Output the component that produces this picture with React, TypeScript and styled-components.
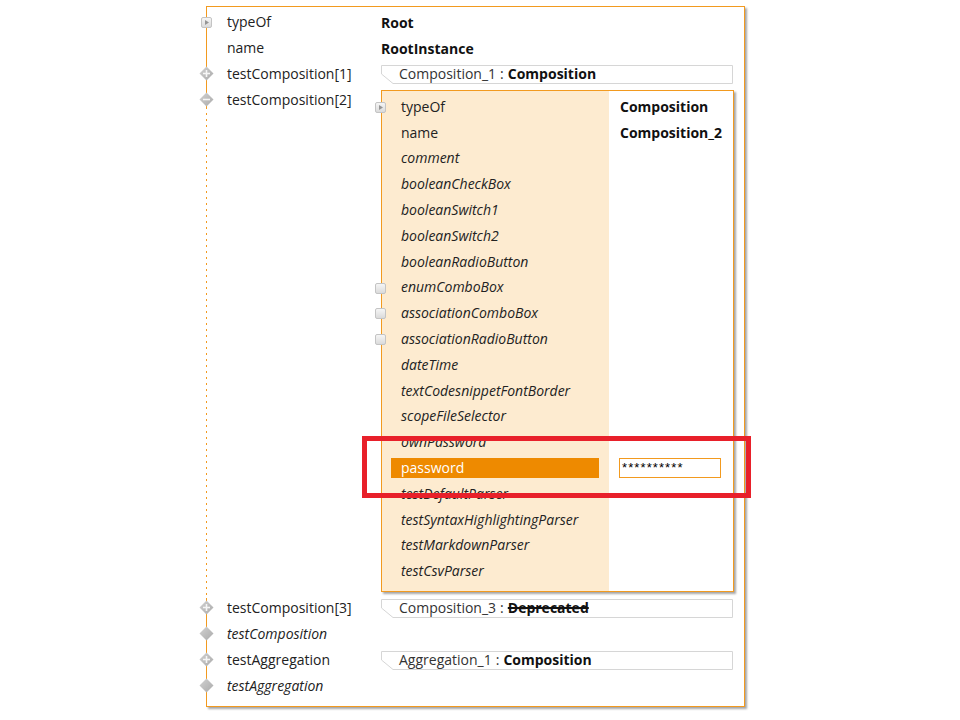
import React from 'react';
import styled, { createGlobalStyle, css } from 'styled-components';

// Palette
const ORANGE = '#f29a1f';
const PEACH = '#fdebd0';
const HIGHLIGHT = '#ee8a00';
const FONT = '"Open Sans", "Noto Sans", sans-serif';

type IconKind = 'none' | 'arrow' | 'square' | 'plus' | 'minus' | 'diamond';

interface RefValue {
  name: string;
  type: string;
  deprecated?: boolean;
}

interface TopRow {
  label: string;
  italic?: boolean;
  icon: IconKind;
  value?: string;
  ref?: RefValue;
  expanded?: boolean;
}

interface InnerRow {
  label: string;
  italic?: boolean;
  icon?: IconKind;
  value?: string;
  selected?: boolean;
  password?: string;
}

const topRows: TopRow[] = [
  { label: 'typeOf', icon: 'arrow', value: 'Root' },
  { label: 'name', icon: 'none', value: 'RootInstance' },
  { label: 'testComposition[1]', icon: 'plus', ref: { name: 'Composition_1', type: 'Composition' } },
  { label: 'testComposition[2]', icon: 'minus', expanded: true },
  { label: 'testComposition[3]', icon: 'plus', ref: { name: 'Composition_3', type: 'Deprecated', deprecated: true } },
  { label: 'testComposition', icon: 'diamond', italic: true },
  { label: 'testAggregation', icon: 'plus', ref: { name: 'Aggregation_1', type: 'Composition' } },
  { label: 'testAggregation', icon: 'diamond', italic: true },
];

const innerRows: InnerRow[] = [
  { label: 'typeOf', icon: 'arrow', value: 'Composition' },
  { label: 'name', value: 'Composition_2' },
  { label: 'comment', italic: true },
  { label: 'booleanCheckBox', italic: true },
  { label: 'booleanSwitch1', italic: true },
  { label: 'booleanSwitch2', italic: true },
  { label: 'booleanRadioButton', italic: true },
  { label: 'enumComboBox', italic: true, icon: 'square' },
  { label: 'associationComboBox', italic: true, icon: 'square' },
  { label: 'associationRadioButton', italic: true, icon: 'square' },
  { label: 'dateTime', italic: true },
  { label: 'textCodesnippetFontBorder', italic: true },
  { label: 'scopeFileSelector', italic: true },
  { label: 'ownPassword', italic: true },
  { label: 'password', selected: true, password: '**********' },
  { label: 'testDefaultParser', italic: true },
  { label: 'testSyntaxHighlightingParser', italic: true },
  { label: 'testMarkdownParser', italic: true },
  { label: 'testCsvParser', italic: true },
];

const GlobalStyle = createGlobalStyle`
  html, body {
    margin: 0;
    padding: 0;
    background: #ffffff;
  }
  body {
    font-family: ${FONT};
    font-size: 14px;
    color: #222222;
  }
`;

const Page = styled.div`
  position: relative;
  width: 960px;
  height: 720px;
  box-sizing: border-box;
  padding: 6px 0 0 206px;
  overflow: hidden;
`;

const OuterPanel = styled.div`
  width: 539px;
  box-sizing: border-box;
  border: 1px solid ${ORANGE};
  box-shadow: 2px 2px 2px rgba(0, 0, 0, 0.35);
  padding: 2px 0 7px;
  background: #ffffff;
`;

const Row = styled.div<{ $expanded?: boolean }>`
  position: relative;
  display: grid;
  grid-template-columns: 20px 154px 1fr;
  min-height: 26px;

  ${({ $expanded }) =>
    $expanded &&
    css`
      &::before {
        content: '';
        position: absolute;
        left: -1px;
        top: 20px;
        bottom: -3px;
        width: 1px;
        background: repeating-linear-gradient(
          to bottom,
          ${ORANGE} 0 2px,
          #ffffff 2px 6px
        );
      }
    `}
`;

const Label = styled.div<{ $italic?: boolean }>`
  grid-column: 2;
  height: 26px;
  line-height: 26px;
  white-space: nowrap;
  font-style: ${({ $italic }) => ($italic ? 'italic' : 'normal')};
  color: #222222;
`;

const ValueCell = styled.div`
  grid-column: 3;
  display: flex;
  flex-direction: column;
  justify-content: center;
  padding-right: 11px;
  min-height: 26px;
`;

const BoldValue = styled.span`
  font-weight: 700;
  color: #111111;
  white-space: nowrap;
`;

const RefBox = styled.div`
  position: relative;
  height: 19px;
  line-height: 17px;
  padding-left: 18px;
  white-space: nowrap;
  color: #333333;
`;

const RefFrame = styled.svg`
  position: absolute;
  inset: 0;
  width: 100%;
  height: 100%;
  overflow: visible;
`;

const RefText = styled.span`
  position: relative;
`;

const Colon = styled.span`
  margin: 0 4px;
`;

const RefType = styled.span<{ $deprecated?: boolean }>`
  font-weight: 700;
  color: #111111;
  text-decoration: ${({ $deprecated }) => ($deprecated ? 'line-through' : 'none')};
  text-decoration-thickness: 1.5px;
`;

const IconSlot = styled.span<{ $left: number; $top: number }>`
  position: absolute;
  left: ${({ $left }) => $left}px;
  top: ${({ $top }) => $top}px;
  display: block;
  line-height: 0;
  z-index: 2;
`;

const NestedPanel = styled.div`
  margin: 3px 0;
  width: 353px;
  box-sizing: border-box;
  border: 1px solid ${ORANGE};
  box-shadow: 2px 2px 2px rgba(0, 0, 0, 0.35);
  padding: 3px 0 7px;
  background: linear-gradient(to right, ${PEACH} 0 227px, #ffffff 227px);
`;

const InnerLine = styled.div`
  position: relative;
  display: grid;
  grid-template-columns: 227px 1fr;
  height: 25.8px;
  align-items: center;
`;

const InnerLabelCell = styled.div`
  padding: 0 10px 0 9px;
`;

const InnerLabel = styled.div<{ $italic?: boolean; $selected?: boolean }>`
  height: 20px;
  line-height: 20px;
  padding-left: 10px;
  white-space: nowrap;
  font-style: ${({ $italic }) => ($italic ? 'italic' : 'normal')};
  background: ${({ $selected }) => ($selected ? HIGHLIGHT : 'transparent')};
  color: ${({ $selected }) => ($selected ? '#ffffff' : '#222222')};
`;

const InnerValueCell = styled.div`
  padding-left: 11px;
  padding-right: 12px;
`;

const PasswordField = styled.div`
  margin-left: -1px;
  width: 102px;
  height: 20px;
  box-sizing: border-box;
  border: 1px solid ${ORANGE};
  background: #ffffff;
  padding-left: 2px;
  font-family: "Liberation Sans", sans-serif;
  font-size: 13px;
  line-height: 17px;
  letter-spacing: 1.1px;
  color: #000000;
`;

const Annotation = styled.div`
  position: absolute;
  left: 362px;
  top: 436px;
  width: 389px;
  height: 62px;
  box-sizing: border-box;
  border: 5px solid #e8202a;
  pointer-events: none;
`;

const Diamond: React.FC<{ sign?: 'plus' | 'minus' }> = ({ sign }) => (
  <svg width="15" height="15" viewBox="0 0 15 15">
    <defs>
      <linearGradient id="dg" x1="0" y1="0" x2="1" y2="1">
        <stop offset="0" stopColor="#d2d2d2" />
        <stop offset="1" stopColor="#aaaaaa" />
      </linearGradient>
    </defs>
    <polygon points="7.5,0.5 14.5,7.5 7.5,14.5 0.5,7.5" fill="url(#dg)" />
    {sign && <line x1="4" y1="7.5" x2="11" y2="7.5" stroke="#f6f6f6" strokeWidth="1.6" />}
    {sign === 'plus' && <line x1="7.5" y1="4" x2="7.5" y2="11" stroke="#f6f6f6" strokeWidth="1.6" />}
  </svg>
);

const SquareIcon: React.FC<{ arrow?: boolean }> = ({ arrow }) => (
  <svg width="11" height="11" viewBox="0 0 11 11">
    <defs>
      <linearGradient id="sg" x1="0" y1="0" x2="0" y2="1">
        <stop offset="0" stopColor="#f7f7f7" />
        <stop offset="1" stopColor="#d9d9d9" />
      </linearGradient>
    </defs>
    <rect x="0.5" y="0.5" width="10" height="10" rx="1.5" fill="url(#sg)" stroke="#c4c4c4" />
    {arrow && <polygon points="4,3 8,5.5 4,8" fill="#959595" />}
  </svg>
);

const TopIcon: React.FC<{ kind: IconKind }> = ({ kind }) => {
  if (kind === 'none') return null;
  if (kind === 'arrow') {
    return (
      <IconSlot $left={-6} $top={8}>
        <SquareIcon arrow />
      </IconSlot>
    );
  }
  return (
    <IconSlot $left={-8} $top={5}>
      <Diamond sign={kind === 'plus' ? 'plus' : kind === 'minus' ? 'minus' : undefined} />
    </IconSlot>
  );
};

const Reference: React.FC<{ value: RefValue }> = ({ value }) => (
  <RefBox>
    <RefFrame viewBox="0 0 352 19" preserveAspectRatio="none">
      <polygon
        points="0.5,0.5 351.5,0.5 351.5,18.5 12,18.5 0.5,9"
        fill="#ffffff"
        stroke="#d6d6d6"
        strokeWidth="1"
      />
    </RefFrame>
    <RefText>
      {value.name}
      <Colon>:</Colon>
      <RefType $deprecated={value.deprecated}>{value.type}</RefType>
    </RefText>
  </RefBox>
);

const NestedComposition: React.FC = () => (
  <NestedPanel>
    {innerRows.map((row) => (
      <InnerLine key={row.label}>
        {row.icon && (
          <IconSlot $left={-7} $top={8}>
            <SquareIcon arrow={row.icon === 'arrow'} />
          </IconSlot>
        )}
        <InnerLabelCell>
          <InnerLabel $italic={row.italic} $selected={row.selected}>
            {row.label}
          </InnerLabel>
        </InnerLabelCell>
        <InnerValueCell>
          {row.value && <BoldValue>{row.value}</BoldValue>}
          {row.password && <PasswordField>{row.password}</PasswordField>}
        </InnerValueCell>
      </InnerLine>
    ))}
  </NestedPanel>
);

export default function App() {
  return (
    <>
      <GlobalStyle />
      <Page>
        <OuterPanel>
          {topRows.map((row, i) => (
            <Row key={`${row.label}-${i}`} $expanded={row.expanded}>
              <TopIcon kind={row.icon} />
              <Label $italic={row.italic}>{row.label}</Label>
              <ValueCell>
                {row.value && <BoldValue>{row.value}</BoldValue>}
                {row.ref && <Reference value={row.ref} />}
                {row.expanded && <NestedComposition />}
              </ValueCell>
            </Row>
          ))}
        </OuterPanel>
        <Annotation />
      </Page>
    </>
  );
}
